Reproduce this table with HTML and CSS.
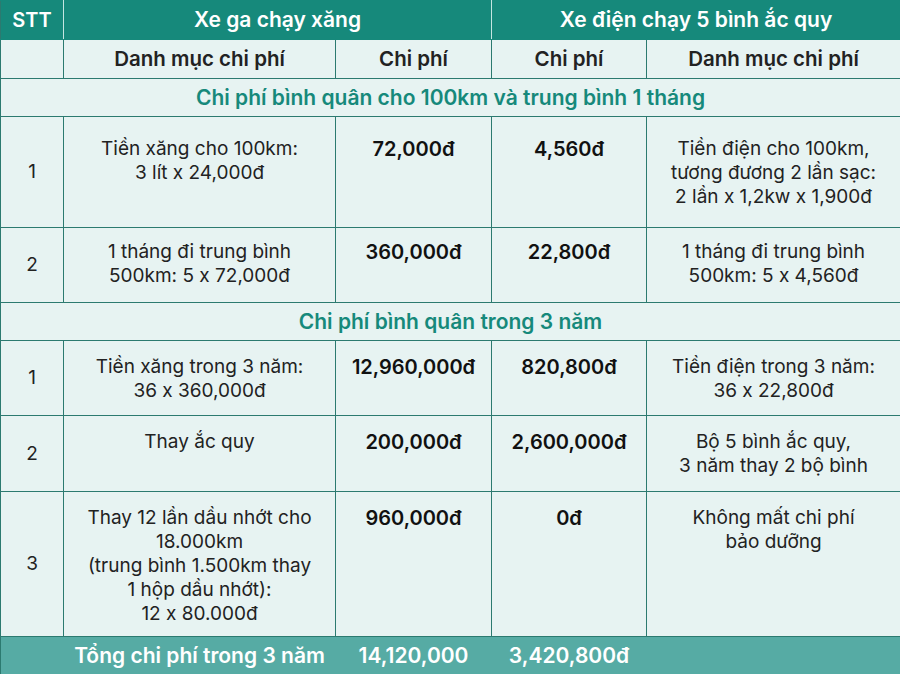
FILE: index.html
```html
<!DOCTYPE html>
<html lang="vi">
<head>
<meta charset="utf-8">
<title>So sánh chi phí</title>
<link rel="stylesheet" href="styles.css">
</head>
<body>
<table class="cost">
  <colgroup>
    <col class="c-stt">
    <col class="c-desc">
    <col class="c-cost">
    <col class="c-cost2">
    <col class="c-desc2">
  </colgroup>
  <thead>
    <tr class="h1">
      <th class="stt-h">STT</th>
      <th colspan="2" class="grp-left">Xe ga chạy xăng</th>
      <th colspan="2" class="grp-right">Xe điện chạy 5 bình ắc quy</th>
    </tr>
    <tr class="h2">
      <th></th>
      <th>Danh mục chi phí</th>
      <th>Chi phí</th>
      <th>Chi phí</th>
      <th class="soft-left">Danh mục chi phí</th>
    </tr>
  </thead>
  <tbody>
    <tr class="section">
      <td colspan="5">Chi phí bình quân cho 100km và trung bình 1 tháng</td>
    </tr>
    <tr class="row r-a after-section">
      <td class="stt">1</td>
      <td>Tiền xăng cho 100km:<br>3 lít x 24,000đ</td>
      <td class="num">72,000đ</td>
      <td class="num">4,560đ</td>
      <td class="soft-left">Tiền điện cho 100km,<br>tương đương 2 lần sạc:<br>2 lần x 1,2kw x 1,900đ</td>
    </tr>
    <tr class="row r-b">
      <td class="stt">2</td>
      <td>1 tháng đi trung bình<br>500km: 5 x 72,000đ</td>
      <td class="num">360,000đ</td>
      <td class="num">22,800đ</td>
      <td class="soft-left">1 tháng đi trung bình<br>500km: 5 x 4,560đ</td>
    </tr>
    <tr class="section">
      <td colspan="5">Chi phí bình quân trong 3 năm</td>
    </tr>
    <tr class="row r-c">
      <td class="stt">1</td>
      <td>Tiền xăng trong 3 năm:<br>36 x 360,000đ</td>
      <td class="num">12,960,000đ</td>
      <td class="num">820,800đ</td>
      <td class="soft-left">Tiền điện trong 3 năm:<br>36 x 22,800đ</td>
    </tr>
    <tr class="row r-d">
      <td class="stt">2</td>
      <td>Thay ắc quy</td>
      <td class="num">200,000đ</td>
      <td class="num">2,600,000đ</td>
      <td class="soft-left">Bộ 5 bình ắc quy,<br>3 năm thay 2 bộ bình</td>
    </tr>
    <tr class="row r-e">
      <td class="stt">3</td>
      <td>Thay 12 lần dầu nhớt cho<br>18.000km<br>(trung bình 1.500km thay<br>1 hộp dầu nhớt):<br>12 x 80.000đ</td>
      <td class="num">960,000đ</td>
      <td class="num">0đ</td>
      <td class="soft-left">Không mất chi phí<br>bảo dưỡng</td>
    </tr>
    <tr class="total">
      <td></td>
      <td>Tổng chi phí trong 3 năm</td>
      <td>14,120,000</td>
      <td>3,420,800đ</td>
      <td class="soft-left"></td>
    </tr>
  </tbody>
</table>
</body>
</html>
```

FILE: styles.css
```css
html, body {
  margin: 0;
  padding: 0;
  background: #e7f3f2;
}

.cost {
  width: 900px;
  border-collapse: collapse;
  table-layout: fixed;
  font-family: "Inter", "Liberation Sans", sans-serif;
  font-feature-settings: "calt" 0;
  font-size: 19px;
  line-height: 24px;
  color: #222;
  background: #e7f3f2;
}

.c-stt { width: 63px; }
.c-desc { width: 272px; }
.c-cost { width: 156px; }
.c-cost2 { width: 155px; }
.c-desc2 { width: 254px; }

.cost th,
.cost td {
  border: 1px solid #2c7a70;
  text-align: center;
  padding: 0 4px;
  white-space: nowrap;
}

.h1 th {
  background: #16897b;
  color: #fff;
  font-weight: 600;
  font-size: 21px;
  height: 38px;
  border-color: #16897b;
  border-left: 1px solid #c4e6e1;
  border-right: 1px solid #c4e6e1;
  vertical-align: middle;
}
.h1 th:first-child { border-left-color: #2c7a70; font-size: 20px; }
.h1 th:last-child { border-right-color: #16897b; }
.grp-left { padding-right: 24px; }
.grp-right { padding-left: 24px; }

.h2 th {
  height: 38px;
  font-weight: 600;
  font-size: 20.5px;
  color: #222;
  border-top: none;
  vertical-align: middle;
}
.h2 th:last-child { border-right-color: #c9f4f2; }

.section td {
  height: 37px;
  color: #16897b;
  font-weight: 600;
  font-size: 21px;
  vertical-align: middle;
  border-right-color: #c9f4f2;
}

.row td {
  vertical-align: top;
  padding-top: 14px;
}
.row td.stt { vertical-align: middle; padding-top: 0; }
.row td.num {
  font-weight: 600;
  font-size: 20px;
  color: #111;
}
.row td:last-child { border-right-color: #c9f4f2; }

.cost .soft-left { border-left-color: #c9f4f2; }

.after-section td { border-top-color: #c9f4f2; }

.r-a { height: 111px; }
.r-a td { padding-top: 20px; }
.r-b { height: 75px; }
.r-b td { padding-top: 12px; }
.r-c { height: 75px; }
.r-d { height: 76px; }
.r-e { height: 145px; }

.total td {
  height: 38px;
  background: #56aba4;
  color: #fff;
  font-weight: 600;
  font-size: 21px;
  vertical-align: middle;
  border-color: #56aba4;
  border-left: 1px solid #2c7a70;
  border-top: 1px solid #2c7a70;
}
.total td.soft-left { border-left-color: #56aba4; }
```
